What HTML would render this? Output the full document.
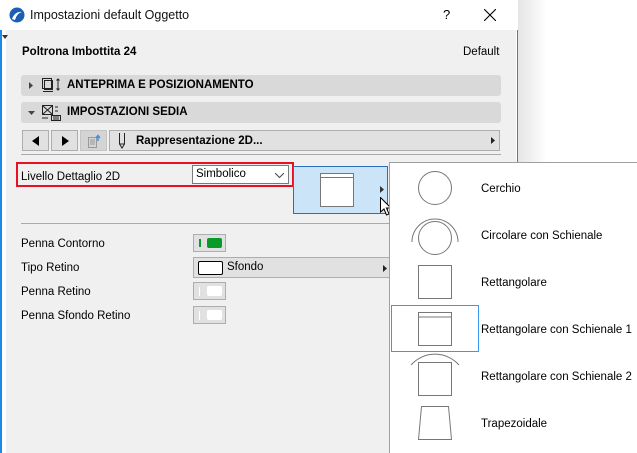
<!DOCTYPE html>
<html><head><meta charset="utf-8"><style>
*{margin:0;padding:0;box-sizing:border-box}
body{width:637px;height:453px;overflow:hidden;background:#fff;font-family:"Liberation Sans",sans-serif;font-size:11px;color:#000;position:relative}
.a{position:absolute}
.hdr{background:#d9d9d9;border-radius:3px;height:21px;left:21px;width:480px;font-weight:bold;font-size:11.5px;line-height:21px}
.btn{background:#e1e1e1;border:1px solid #adadad;height:21px;top:130px}
.sw{width:33px;height:18px;border:1px solid #adadad;background:#e1e1e1}
.lbl{left:21px;font-size:11.5px}
.it{left:481px;font-size:11.5px}
</style></head><body>
<div class="a" style="left:517px;top:0;width:30px;height:162px;background:linear-gradient(90deg,#e4e4e4,#fff)"></div>
<div class="a" style="left:0;top:0;width:518px;height:453px;border-left:2px solid #1e88e5;border-right:1px solid #1e88e5;background:#fff"></div>
<div class="a" style="left:6px;top:30px;width:510px;height:423px;background:#f0f0f0"></div>
<div class="a" style="left:0;top:0;width:518px;height:30px;background:#fff"></div>
<svg class="a" style="left:9px;top:7px" width="16" height="16"><circle cx="8" cy="8" r="7.5" fill="#1a5fb4"/><path d="M3 12 Q6 4 13 5 Q8 6 6 13Z" fill="#fff"/></svg>
<div class="a" style="left:30px;top:8px;font-size:12.5px;color:#111">Impostazioni default Oggetto</div>
<div class="a" style="left:443px;top:7px;font-size:13px">?</div>
<svg class="a" style="left:484px;top:9px" width="12" height="12"><path d="M0 0L12 12M12 0L0 12" stroke="#000" stroke-width="1.1"/></svg>
<svg class="a" style="left:2px;top:35px" width="6" height="4"><path d="M0 0H6L3 4Z" fill="#333"/></svg>
<div class="a" style="left:22px;top:46px;font-weight:bold;font-size:11.5px">Poltrona Imbottita 24</div>
<div class="a" style="left:463px;top:46px;font-size:11.5px">Default</div>
<div class="a hdr" style="top:75px"><svg class="a" style="left:8px;top:7px" width="4" height="7"><path d="M0 0L4 3.5L0 7Z" fill="#444"/></svg>
<svg class="a" style="left:20px;top:3px" width="22" height="16" fill="none" stroke="#222"><rect x="3.5" y="2.5" width="8" height="9"/><rect x="1.5" y="0.5" width="9" height="10"/><path d="M2 13.5H12M17 1V12M15.5 2.5L17 1L18.5 2.5M15.5 10.5L17 12L18.5 10.5"/></svg>
<span class="a" style="left:46px">ANTEPRIMA E POSIZIONAMENTO</span></div>
<div class="a hdr" style="top:102px"><svg class="a" style="left:7px;top:9px" width="7" height="4"><path d="M0 0H7L3.5 4Z" fill="#444"/></svg>
<svg class="a" style="left:20px;top:3px" width="22" height="16" fill="none" stroke="#222"><rect x="1.5" y="0.5" width="10" height="9"/><path d="M2 1L11 9M11 1L2 9M14 2H17M14 6H17M10.5 10.5H19.5V15.5H10.5ZM12 12H18M12 14H18M1 13H7"/></svg>
<span class="a" style="left:46px">IMPOSTAZIONI SEDIA</span></div>
<div class="a btn" style="left:22px;width:27px"><svg class="a" style="left:9px;top:5px" width="7" height="10"><path d="M7 0V10L0 5Z" fill="#000"/></svg></div>
<div class="a btn" style="left:51px;width:27px"><svg class="a" style="left:10px;top:5px" width="7" height="10"><path d="M0 0V10L7 5Z" fill="#000"/></svg></div>
<div class="a btn" style="left:80px;width:27px;background:#d4d4d4;border-color:#c4c4c4"><svg class="a" style="left:5px;top:3px" width="18" height="14" fill="none" stroke="#999"><path d="M2.5 3.5H10.5V13.5H2.5ZM4 6H9M4 8H9M4 10H9"/><path d="M12 7V2M10 4L12 1.5L14 4" stroke="#4a90d9" stroke-width="1.5"/></svg></div>
<div class="a btn" style="left:109px;width:391px"><svg class="a" style="left:8px;top:2px" width="8" height="16" fill="none" stroke="#222"><path d="M1.5 0V11L4 15L6.5 11V0M1.5 11H6.5"/></svg>
<span class="a" style="left:26px;top:4px;font-weight:bold;font-size:11.5px">Rappresentazione 2D...</span>
<svg class="a" style="left:381px;top:6px" width="4" height="7"><path d="M0 0L4 3.5L0 7Z" fill="#222"/></svg></div>
<div class="a" style="left:21px;top:154px;width:480px;height:1px;background:#aaa"></div>
<div class="a" style="left:16px;top:162px;width:278px;height:25px;border:2px solid #e81123"></div>
<div class="a lbl" style="top:171px">Livello Dettaglio 2D</div>
<div class="a" style="left:192px;top:165px;width:97px;height:19px;border:1px solid #7a7a7a;background:#fff"><span class="a" style="left:3px;top:2px;font-size:11.5px">Simbolico</span>
<svg class="a" style="left:82px;top:7px" width="9" height="5"><path d="M0 0L4.5 4.5L9 0" fill="none" stroke="#444"/></svg></div>
<div class="a" style="left:293px;top:166px;width:95px;height:48px;background:#cce4f7;border:1px solid #2a6ebd"></div>
<svg class="a" style="left:320px;top:173px" width="36" height="36" fill="#fff" stroke="#777"><rect x="0.5" y="0.5" width="33" height="33"/><path d="M0.5 4.5H33.5"/></svg>
<svg class="a" style="left:380px;top:186px" width="4" height="7"><path d="M0 0L4 3.5L0 7Z" fill="#333"/></svg>
<svg class="a" style="left:380px;top:197px" width="12" height="19"><path d="M0.5 0.5V15L4 12L6.5 18L9 17L6.5 11H11Z" fill="#fff" stroke="#000"/></svg>
<div class="a" style="left:21px;top:223px;width:368px;height:1px;background:#aaa"></div>
<div class="a lbl" style="top:238px">Penna Contorno</div>
<div class="a sw" style="left:193px;top:234px"><div class="a" style="left:5px;top:4px;width:2px;height:8px;background:#0a9a2a"></div><div class="a" style="left:13px;top:3px;width:15px;height:10px;background:#0a9a2a;border-radius:2px"></div></div>
<div class="a lbl" style="top:262px">Tipo Retino</div>
<div class="a" style="left:193px;top:257px;width:196px;height:21px;border:1px solid #adadad;background:#e1e1e1;border-right:none"><div class="a" style="left:4px;top:3px;width:25px;height:14px;border:1px solid #000;background:#fff;border-radius:2px"></div><span class="a" style="left:33px;top:3px;font-size:11.5px">Sfondo</span><svg class="a" style="left:189px;top:7px" width="4" height="7"><path d="M0 0L4 3.5L0 7Z" fill="#222"/></svg></div>
<div class="a lbl" style="top:286px">Penna Retino</div>
<div class="a sw" style="left:193px;top:282px"><div class="a" style="left:5px;top:4px;width:1px;height:9px;background:#fff"></div><div class="a" style="left:13px;top:3px;width:15px;height:10px;background:#fff;border-radius:2px"></div></div>
<div class="a lbl" style="top:310px">Penna Sfondo Retino</div>
<div class="a sw" style="left:193px;top:306px"><div class="a" style="left:5px;top:4px;width:1px;height:9px;background:#fff"></div><div class="a" style="left:13px;top:3px;width:15px;height:10px;background:#fff;border-radius:2px"></div></div>
<div class="a" style="left:389px;top:162px;width:248px;height:291px;background:#fff;border:1px solid #a0a0a0;border-right:none;border-bottom:none"></div>
<div class="a" style="left:391px;top:305px;width:88px;height:47px;border:1px solid #3c97f0"></div>
<svg class="a" style="left:389px;top:162px" width="100" height="291" fill="none" stroke="#777" stroke-width="1">
<circle cx="46" cy="26" r="16.5"/>
<path d="M23 80 A23 23 0 0 1 69 80"/><circle cx="46" cy="76" r="16.5"/>
<rect x="29.5" y="103.5" width="33" height="33"/>
<rect x="29.5" y="150.5" width="33" height="33"/><path d="M29.5 155H62.5"/>
<rect x="29.5" y="200.5" width="33" height="33"/><path d="M22 203 A32 32 0 0 1 70 203"/>
<path d="M32.5 244.5H59.5L62.5 277.5H29.5Z"/>
</svg>
<div class="a it" style="top:183px">Cerchio</div>
<div class="a it" style="top:230px">Circolare con Schienale</div>
<div class="a it" style="top:277px">Rettangolare</div>
<div class="a it" style="top:324px">Rettangolare con Schienale 1</div>
<div class="a it" style="top:371px">Rettangolare con Schienale 2</div>
<div class="a it" style="top:418px">Trapezoidale</div>
</body></html>
